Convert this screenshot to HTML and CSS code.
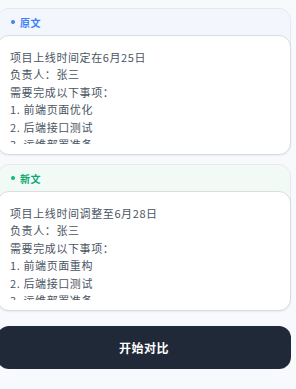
FILE: index.html
```html
<!DOCTYPE html>
<html lang="zh-CN">

<head>
    <meta charset="UTF-8" />
    <meta name="viewport" content="width=device-width, initial-scale=1.0" />
    <title>文本对比</title>
    <link rel="stylesheet" href="styles.css">
</head>

<body>
    <main class="page">
        <section class="card card-old">
            <div class="card-head">
                <span class="dot"></span>
                <span class="label">原文</span>
            </div>
            <div class="text-box">
                <div class="text">
                    <p>项目上线时间定在6月25日</p>
                    <p>负责人：张三</p>
                    <p>需要完成以下事项：</p>
                    <p>1. 前端页面优化</p>
                    <p>2. 后端接口测试</p>
                    <p>3. 运维部署准备</p>
                </div>
            </div>
        </section>

        <section class="card card-new">
            <div class="card-head">
                <span class="dot"></span>
                <span class="label">新文</span>
            </div>
            <div class="text-box">
                <div class="text">
                    <p>项目上线时间调整至6月28日</p>
                    <p>负责人：张三</p>
                    <p>需要完成以下事项：</p>
                    <p>1. 前端页面重构</p>
                    <p>2. 后端接口测试</p>
                    <p>3. 运维部署准备</p>
                </div>
            </div>
        </section>

        <button class="btn-compare">开始对比</button>
    </main>
</body>

</html>
```

FILE: styles.css
```css
* {
    margin: 0;
    padding: 0;
    box-sizing: border-box;
}

body {
    font-family: "Noto Sans CJK SC", "Noto Sans", sans-serif;
    color: #4b5563;
    background-color: #f7f9fc;
}

.page {
    width: 294px;
    margin-left: -3px;
    padding-top: 8px;
    display: flex;
    flex-direction: column;
}

.card {
    border: 1px solid #e5eaf1;
    border-radius: 12px;
    background: #f3f6fc;
}

.card-new {
    margin-top: 9px;
    background: #f2faf6;
}

.card-head {
    height: 26px;
    padding-left: 13px;
    display: flex;
    align-items: center;
    gap: 5px;
}

.dot {
    width: 4px;
    height: 4px;
    border-radius: 50%;
    background: #3b82f6;
}

.label {
    font-size: 10px;
    font-weight: 700;
    letter-spacing: 0.5px;
    color: #3b82f6;
}

.card-new .dot {
    background: #10b981;
}

.card-new .label {
    color: #10a874;
}

.text-box {
    margin: 0 -1px -1px;
    height: 120px;
    padding: 13px 12px 10px;
    background: #fff;
    border: 1px solid #d9dde3;
    border-radius: 12px;
    box-shadow: 0 1px 2px rgba(0, 0, 0, 0.06);
}

.text {
    height: 95px;
    overflow: hidden;
    font-size: 11px;
    line-height: 17.4px;
    letter-spacing: 0.6px;
}

.btn-compare {
    margin-top: 15px;
    height: 43px;
    border: none;
    border-radius: 12px;
    background: #1f2937;
    color: #fff;
    font-family: inherit;
    font-size: 12px;
    font-weight: 700;
    letter-spacing: 0.5px;
    cursor: pointer;
}
```
